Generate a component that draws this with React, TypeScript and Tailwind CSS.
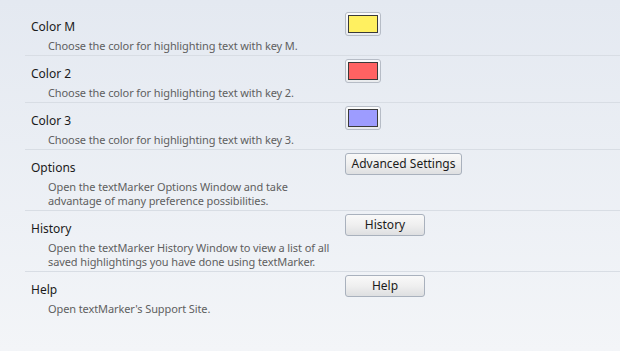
import React from 'react';

type Row = {
  title: string;
  desc: string[];
  swatch?: string;
  button?: string;
  buttonWidth?: string;
};

const rows: Row[] = [
  { title: 'Color M', desc: ['Choose the color for highlighting text with key M.'], swatch: 'bg-[#fff060]' },
  { title: 'Color 2', desc: ['Choose the color for highlighting text with key 2.'], swatch: 'bg-[#ff6262]' },
  { title: 'Color 3', desc: ['Choose the color for highlighting text with key 3.'], swatch: 'bg-[#9d9cff]' },
  {
    title: 'Options',
    desc: ['Open the textMarker Options Window and take', 'advantage of many preference possibilities.'],
    button: 'Advanced Settings',
    buttonWidth: 'w-[117px]',
  },
  {
    title: 'History',
    desc: ['Open the textMarker History Window to view a list of all', 'saved highlightings you have done using textMarker.'],
    button: 'History',
    buttonWidth: 'w-[80px]',
  },
  { title: 'Help', desc: ["Open textMarker's Support Site."], button: 'Help', buttonWidth: 'w-[80px]' },
];

export default function App() {
  return (
    <div
      className="w-[620px] h-[351px] overflow-hidden bg-gradient-to-b from-[#e4e9f1] to-[#f3f5f8] pl-[25px] pt-[9px]"
      style={{ fontFamily: '"Noto Sans", "Open Sans", sans-serif' }}
    >
      {rows.map((row, i) => (
        <div
          key={i}
          className={`flex pt-[3px] pb-[2px] ${i < rows.length - 1 ? 'border-b border-[#d8dde4]' : ''}`}
        >
          {/* Label column */}
          <div className="w-[320px] pl-[6px] pt-[7px]">
            <div className="text-[12px] leading-[16px] text-[#1b1b1b]">{row.title}</div>
            <div className="mt-[4px] pl-[17px] text-[11px] leading-[14px] tracking-[-0.1px] text-[#5f5f5f] whitespace-nowrap">
              {row.desc.map((line, j) => (
                <div key={j}>{line}</div>
              ))}
            </div>
          </div>

          {/* Control column */}
          <div>
            {row.swatch ? (
              <div className="w-[36px] h-[24px] rounded-[3px] border border-[#b6bcc6] bg-gradient-to-b from-[#fbfbfb] to-[#e9ebee] flex items-center justify-center">
                <div className={`w-[30px] h-[18px] border border-[#3a3a3a] ${row.swatch}`} />
              </div>
            ) : (
              <button
                className={`${row.buttonWidth} h-[22px] rounded-[3px] border border-[#a9b1bd] bg-gradient-to-b from-[#f9f9f9] via-[#efefef] to-[#dedfe1] text-[12px] leading-[16px] text-[#1b1b1b] flex items-center justify-center`}
              >
                {row.button}
              </button>
            )}
          </div>
        </div>
      ))}
    </div>
  );
}
